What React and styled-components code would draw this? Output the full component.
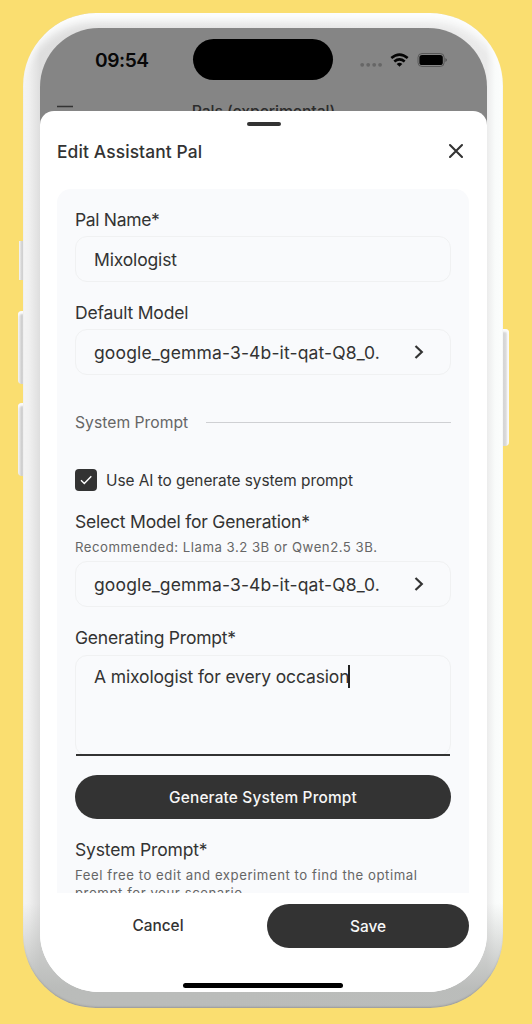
import React from 'react';
import styled, { createGlobalStyle } from 'styled-components';

const Global = createGlobalStyle`
  * { box-sizing: border-box; }
  body { margin: 0; background: #fade70; font-family: Inter, "Liberation Sans", sans-serif; color: #333; }
`;

const Stage = styled.main`
  position: relative;
  width: 532px;
  height: 1024px;
  overflow: hidden;
  padding: 13px 29px 16px 23px;
  background: #fade70;
`;

const Body = styled.div`
  position: relative;
  height: 995px;
  padding: 15px 16px 16px 17px;
  border-radius: 73px;
  background:
    linear-gradient(to bottom, transparent 890px, rgba(184, 186, 184, 0.95) 976px),
    linear-gradient(to right, #f4f4f4 0, #f0f0f0 6px, #dedede 17px, #eaeaea 463px, #f9fbfa 472px, #fcfefd 480px);
  box-shadow: inset 0 15px 8px -6px #fcfdfd, inset 0 -2px 2px -1px #999;
`;

const SideKey = styled.i`
  position: absolute;
  top: ${(p) => p.$top}px;
  ${(p) => (p.$right ? 'left: 503px;' : `left: ${p.$square ? 19 : 18}px;`)}
  width: ${(p) => (p.$right ? 6 : p.$square ? 5 : 6)}px;
  height: ${(p) => p.$height}px;
  border-radius: ${(p) => (p.$square ? '0' : p.$right ? '0 4px 4px 0' : '4px 0 0 4px')};
  background: ${(p) => (p.$right
    ? 'linear-gradient(to right, #d2d2d2, #dcdcdc 50%, #fafafa 80%)'
    : 'linear-gradient(to right, #f0f0f0 10%, #cfcfcf 60%, #d8d8d8)')};
  box-shadow: ${(p) => (p.$square ? 'none' : 'inset 0 4px 2px -1px #fbfbfb')};
`;

const Screen = styled.div`
  display: flex;
  flex-direction: column;
  height: 964px;
  overflow: hidden;
  border-radius: 59px;
  background: linear-gradient(#858585 160px, #fff 160px);
`;

const StatusBar = styled.header`
  display: grid;
  grid-template-columns: 153px 140px 154px;
  align-items: center;
  height: 64px;
  flex: none;
`;

const Clock = styled.time`
  padding-left: 55px;
  font-size: 19.2px;
  font-weight: 600;
  letter-spacing: -0.45px;
  color: #080808;
`;

const Island = styled.div`
  height: 41px;
  margin-top: -1px;
  border-radius: 21px;
  background: #000;
`;

const Indicators = styled.div`
  display: flex;
  align-items: center;
  padding-left: 27px;
`;

const AppBar = styled.div`
  display: grid;
  grid-template-columns: 100px 1fr 100px;
  height: 19px;
  flex: none;
  overflow: hidden;
`;

const MenuIcon = styled.svg`
  margin: 12px 0 0 16px;
`;

const AppTitle = styled.div`
  padding-top: 9px;
  line-height: 22px;
  text-align: center;
  white-space: nowrap;
  font-size: 15.8px;
  font-weight: 500;
  letter-spacing: -0.12px;
  color: #2c2c2c;
`;

const Sheet = styled.section`
  display: flex;
  flex-direction: column;
  flex: 1;
  border-radius: 14px 14px 0 0;
  background: #fff;
`;

const Handle = styled.div`
  width: 34px;
  height: 4px;
  margin: 11px auto 0;
  border-radius: 2px;
  background: #333;
`;

const SheetHeader = styled.div`
  display: flex;
  align-items: center;
  justify-content: space-between;
  height: 50px;
  padding: 0 23px 0 17px;
`;

const Title = styled.h1`
  margin: 1px 0 0;
  font-size: 17.4px;
  font-weight: 500;
  letter-spacing: 0.12px;
`;

const Card = styled.div`
  height: 704px;
  margin: 13px 18px 0 17px;
  padding: 19px 18px 0;
  overflow: hidden;
  border-radius: 14px 14px 0 0;
  background: #f9fafc;
`;

const Label = styled.div`
  margin-top: ${(p) => p.$gap || 0}px;
  line-height: 24px;
  font-size: 17.5px;
  letter-spacing: ${(p) => p.$spacing || -0.21}px;
  white-space: nowrap;
`;

const Field = styled.div`
  display: flex;
  align-items: center;
  justify-content: space-between;
  height: 46px;
  margin-top: ${(p) => p.$gap}px;
  padding: 0 26px 0 18px;
  border: 1px solid #f0f1f2;
  border-radius: 12px;
  font-size: 17.5px;
  letter-spacing: ${(p) => p.$spacing}px;
  white-space: nowrap;
`;

const Divider = styled.div`
  display: flex;
  align-items: center;
  gap: 18px;
  height: 24px;
  margin-top: 35px;
  color: #666;
  font-size: 15.7px;
  letter-spacing: 0.02px;
  white-space: nowrap;

  &::after {
    content: '';
    flex: 1;
    height: 1px;
    background: #cfd0d3;
  }
`;

const CheckRow = styled.div`
  display: flex;
  align-items: center;
  gap: 9px;
  height: 24px;
  margin-top: 34px;
  font-size: 15.4px;
  letter-spacing: -0.04px;
  white-space: nowrap;
`;

const Checkbox = styled.span`
  display: grid;
  place-items: center;
  width: 22px;
  height: 22px;
  border-radius: 4px;
  background: #333;
`;

const Hint = styled.div`
  margin-top: ${(p) => p.$gap}px;
  line-height: 18px;
  font-size: 13.2px;
  letter-spacing: ${(p) => p.$spacing}px;
  color: #666;
  white-space: nowrap;
`;

const TextArea = styled.div`
  position: relative;
  display: flex;
  height: 101px;
  margin-top: 5px;
  padding: 10px 18px;
  border: 1px solid #f0f1f2;
  border-radius: 12px;
  font-size: 17.5px;
  line-height: 22px;
  letter-spacing: -0.14px;
  white-space: nowrap;

  &::after {
    content: '';
    position: absolute;
    right: 0;
    bottom: -1px;
    left: 0;
    height: 2px;
    background: #333;
  }
`;

const Caret = styled.span`
  width: 2px;
  height: 23px;
  margin: -1px 0 0 -1px;
  background: #222;
`;

const Button = styled.button`
  display: block;
  width: ${(p) => p.$width}px;
  height: 44px;
  margin: ${(p) => p.$gap || 0}px 0 0;
  padding: ${(p) => (p.$plain ? '0 0 2px' : '0')};
  border: 0;
  border-radius: 22px;
  background: ${(p) => (p.$plain ? 'transparent' : '#333')};
  color: ${(p) => (p.$plain ? '#333' : '#f7f7f7')};
  font: 500 15.4px Inter, sans-serif;
  letter-spacing: ${(p) => p.$spacing || 0}px;
`;

const Actions = styled.footer`
  display: flex;
  justify-content: space-between;
  padding: 11px 18px 0 17px;
`;

const HomeBar = styled.div`
  width: 160px;
  height: 5px;
  margin: 35px 0 0 143px;
  border-radius: 3px;
  background: #000;
`;

const Chevron = () => (
  <svg width="10" height="16" viewBox="0 0 10 16" fill="none" stroke="#333" strokeWidth="2.2">
    <path d="M1.5 2 L7.8 8 L1.5 14" />
  </svg>
);

const model = 'google_gemma-3-4b-it-qat-Q8_0.';

export default function App() {
  return (
    <Stage>
      <Global />
      <SideKey $top={241} $height={39} $square />
      <SideKey $top={311} $height={73} />
      <SideKey $top={403} $height={73} />
      <SideKey $top={329} $height={117} $right />
      <Body>
        <Screen>
          <StatusBar>
            <Clock>09:54</Clock>
            <Island />
            <Indicators>
              <svg width="90" height="20" viewBox="0 0 90 20">
                <g fill="#666">
                  <circle cx="2.2" cy="14.8" r="1.9" />
                  <circle cx="8.2" cy="14.8" r="1.9" />
                  <circle cx="14.2" cy="14.8" r="1.9" />
                  <circle cx="20.1" cy="14.8" r="1.9" />
                </g>
                <g fill="none" stroke="#050505" strokeWidth="2.6">
                  <path d="M31.3 8 Q39.5 1.1 47.7 8" />
                  <path d="M34.3 11.5 Q39.5 7.2 44.7 11.5" />
                </g>
                <path d="M36.7 13.9 Q39.5 11.8 42.3 13.9 L39.5 16.8 Z" fill="#050505" />
                <rect x="58" y="3.5" width="26.2" height="13" rx="4" fill="none" stroke="#585858" />
                <rect x="59.4" y="4.9" width="23.4" height="10.2" rx="2.7" fill="#000" />
                <path d="M85.4 8 Q88.6 10 85.4 12 Z" fill="#555" />
              </svg>
            </Indicators>
          </StatusBar>
          <AppBar>
            <MenuIcon width="18" height="12" viewBox="0 0 18 12">
              <path d="M1 2.5 H17 M1 9 H17" stroke="#333" strokeWidth="1.6" />
            </MenuIcon>
            <AppTitle>Pals (experimental)</AppTitle>
          </AppBar>
          <Sheet>
            <Handle />
            <SheetHeader>
              <Title>Edit Assistant Pal</Title>
              <svg width="16" height="16" viewBox="0 0 16 16">
                <path d="M2 2 L14 14 M14 2 L2 14" stroke="#333" strokeWidth="2.1" strokeLinecap="round" />
              </svg>
            </SheetHeader>
            <Card>
              <Label $spacing={-0.33}>Pal Name*</Label>
              <Field $gap={4} $spacing={-0.15}>Mixologist</Field>
              <Label $gap={19} $spacing={-0.2}>Default Model</Label>
              <Field $gap={4} $spacing={0.14}><span>{model}</span><Chevron /></Field>
              <Divider>System Prompt</Divider>
              <CheckRow>
                <Checkbox>
                  <svg width="14" height="12" viewBox="0 0 14 12" fill="none">
                    <path d="M2 6.3 L5.3 9.5 L12.3 2.2" stroke="#fff" strokeWidth="1.4" />
                  </svg>
                </Checkbox>
                Use AI to generate system prompt
              </CheckRow>
              <Label $gap={18}>Select Model for Generation*</Label>
              <Hint $gap={4} $spacing={0.5}>Recommended: Llama 3.2 3B or Qwen2.5 3B.</Hint>
              <Field $gap={5} $spacing={0.14}><span>{model}</span><Chevron /></Field>
              <Label $gap={19}>Generating Prompt*</Label>
              <TextArea>A mixologist for every occasion<Caret /></TextArea>
              <Button $gap={19} $width={376} $spacing={0.18}>Generate System Prompt</Button>
              <Label $gap={19} $spacing={-0.18}>System Prompt*</Label>
              <Hint $gap={4} $spacing={0.54}>
                Feel free to edit and experiment to find the optimal
                <br />
                prompt for your scenario.
              </Hint>
            </Card>
            <Actions>
              <Button $plain $width={202}>Cancel</Button>
              <Button $width={202}>Save</Button>
            </Actions>
            <HomeBar />
          </Sheet>
        </Screen>
      </Body>
    </Stage>
  );
}
